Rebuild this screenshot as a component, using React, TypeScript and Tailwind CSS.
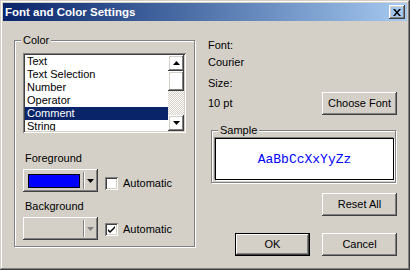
import React from "react";

const raised =
  "shadow-[inset_-1px_-1px_#404040,inset_1px_1px_#ffffff,inset_-2px_-2px_#808080,inset_2px_2px_#d4d0c8]";
const sunken =
  "shadow-[inset_1px_1px_#808080,inset_-1px_-1px_#ffffff,inset_2px_2px_#404040,inset_-2px_-2px_#d4d0c8]";

const COLOR_ITEMS = ["Text", "Text Selection", "Number", "Operator", "Comment", "String"];

const Arrow = ({ up = false, gray = false }: { up?: boolean; gray?: boolean }) => (
  <svg width="7" height="4" viewBox="0 0 7 4" className={up ? "rotate-180" : ""}>
    <path d="M0 0h7L3.5 4z" fill={gray ? "#808080" : "#000000"} />
  </svg>
);

const Button = ({ label, isDefault = false }: { label: string; isDefault?: boolean }) =>
  isDefault ? (
    <div className="w-[75px] h-[23px] border border-black">
      <button className={`w-full h-full ${raised} text-[11px] leading-[13px]`}>{label}</button>
    </div>
  ) : (
    <button className={`w-[75px] h-[23px] ${raised} text-[11px] leading-[13px]`}>{label}</button>
  );

const Checkbox = ({ checked }: { checked: boolean }) => (
  <div className={`w-[13px] h-[13px] bg-white ${sunken} flex items-center justify-center`}>
    {checked && (
      <svg width="7" height="7" viewBox="0 0 7 7">
        <path d="M0 3l2 2 5-5v2L2 7 0 5z" fill="#000" />
      </svg>
    )}
  </div>
);

const ColorCombo = ({ color }: { color?: string }) => (
  <div className={`w-[75px] h-[23px] ${raised} flex items-center pl-[5px] pr-[4px]`}>
    <div className="w-[54px] h-[14px] flex">
      {color && <div className="w-full h-full border border-[#000]" style={{ background: color }} />}
    </div>
    <div className="ml-[3px] w-[2px] h-[17px] border-l border-[#808080] bg-white" />
    <div className="ml-[2px] flex-1 flex justify-center">
      <Arrow gray={!color} />
    </div>
  </div>
);

const GroupBox = ({
  title,
  className,
  children,
}: {
  title: string;
  className: string;
  children: React.ReactNode;
}) => (
  <div className={`relative border border-[#808080] shadow-[inset_1px_1px_#ffffff,1px_1px_#ffffff] ${className}`}>
    <span className="absolute left-[6px] top-[-7px] px-[2px] bg-[#d4d0c8] leading-[13px]">{title}</span>
    {children}
  </div>
);

export default function App() {
  return (
    <div className="w-[410px] h-[270px] bg-[#d4d0c8] p-[3px] flex flex-col font-['Liberation_Sans',Arial,sans-serif] text-[11px] text-black shadow-[inset_-1px_-1px_#404040,inset_1px_1px_#d4d0c8,inset_-2px_-2px_#808080,inset_2px_2px_#ffffff]">
      {/* title bar */}
      <div className="h-[18px] flex items-start bg-linear-to-r from-[#0a246a] to-[#a6caf0]">
        <span className="ml-[2px] mt-[2px] text-white font-bold text-[11.5px] leading-[14px]">
          Font and Color Settings
        </span>
        <button className={`ml-auto mt-[2px] mr-[2px] w-[16px] h-[14px] ${raised} flex items-center justify-center`}>
          <svg width="8" height="7" viewBox="0 0 8 7">
            <path d="M0 0h2l2 2.5L6 0h2L5 3.5 8 7H6L4 4.5 2 7H0l3-3.5z" fill="#000" />
          </svg>
        </button>
      </div>

      <div className="flex-1 flex">
        {/* left column */}
        <div className="ml-[11px] mt-[19px]">
          <GroupBox title="Color" className="w-[181px] h-[207px] flex flex-col">
            <div className={`ml-[8px] mt-[12px] w-[163px] h-[80px] bg-white ${sunken} p-[2px] flex`}>
              <div className="flex-1 overflow-hidden">
                {COLOR_ITEMS.map((item) => (
                  <div
                    key={item}
                    className={`h-[13px] leading-[13px] pl-[2px] whitespace-nowrap ${
                      item === "Comment" ? "bg-[#0a246a] text-white" : ""
                    }`}
                  >
                    {item}
                  </div>
                ))}
              </div>
              <div className="w-[16px] flex flex-col">
                <div className={`h-[16px] ${raised} flex items-center justify-center`}>
                  <Arrow up />
                </div>
                <div className={`h-[20px] ${raised}`} />
                <div className="flex-1 bg-[repeating-conic-gradient(#ffffff_0_25%,#d4d0c8_0_50%)] bg-[length:2px_2px]" />
                <div className={`h-[16px] ${raised} flex items-center justify-center`}>
                  <Arrow />
                </div>
              </div>
            </div>

            <div className="ml-[10px] mt-[19px] leading-[13px]">Foreground</div>
            <div className="ml-[8px] mt-[4px] flex items-start">
              <ColorCombo color="#0000ff" />
              <div className="ml-[7px] mt-[8px] flex items-center">
                <Checkbox checked={false} />
                <span className="ml-[5px] leading-[13px]">Automatic</span>
              </div>
            </div>

            <div className="ml-[10px] mt-[8px] leading-[13px]">Background</div>
            <div className="ml-[8px] mt-[4px] flex items-start">
              <ColorCombo />
              <div className="ml-[7px] mt-[6px] flex items-center">
                <Checkbox checked />
                <span className="ml-[5px] leading-[13px]">Automatic</span>
              </div>
            </div>
          </GroupBox>
        </div>

        {/* right column */}
        <div className="ml-[13px] w-[189px] mt-[18px] flex flex-col">
          <div className="leading-[13px]">Font:</div>
          <div className="mt-[4px] leading-[13px]">Courier</div>
          <div className="mt-[8px] leading-[13px]">Size:</div>
          <div className="mt-[2px] flex items-center justify-between">
            <span className="leading-[13px]">10 pt</span>
            <Button label="Choose Font" />
          </div>

          <GroupBox title="Sample" className="ml-[3px] mt-[15px] w-[185px] h-[53px] pl-[3px] pt-[7px]">
            <div className="w-[179px] h-[42px] bg-white border border-black shadow-[-1px_-1px_#808080,1px_1px_#ffffff] flex items-center justify-center">
              <span className="font-['Liberation_Mono','Courier_New',monospace] text-[13px] text-[#0000ff] leading-[15px]">
                AaBbCcXxYyZz
              </span>
            </div>
          </GroupBox>

          <div className="mt-[10px] flex justify-end">
            <Button label="Reset All" />
          </div>
          <div className="mt-[17px] flex justify-end gap-[12px]">
            <Button label="OK" isDefault />
            <Button label="Cancel" />
          </div>
        </div>
      </div>
    </div>
  );
}
